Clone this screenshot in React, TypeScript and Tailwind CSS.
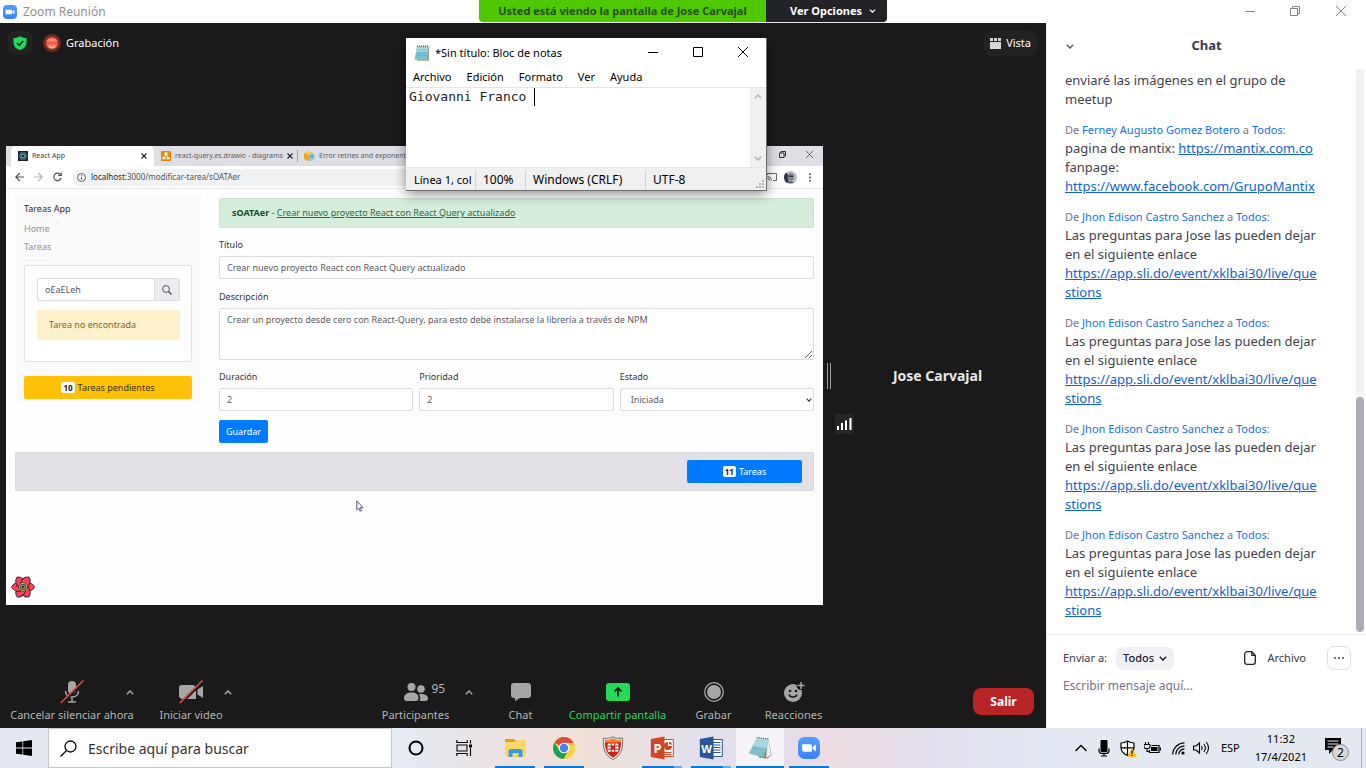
import type { ReactNode } from "react";

const sans = "font-['Noto_Sans','Open_Sans',sans-serif]";

/* ---------- shared icons ---------- */

function ChevronIcon({ up = false, className = "" }: { up?: boolean; className?: string }) {
  return (
    <svg viewBox="0 0 8 5" className={className} fill="none" stroke="currentColor" strokeWidth="1.5" aria-hidden="true">
      <path d={up ? "M.8 4.2 4 1l3.2 3.2" : "M.8.8 4 4 7.2.8"} />
    </svg>
  );
}

function CloseIcon({ className = "" }: { className?: string }) {
  return (
    <svg viewBox="0 0 10 10" className={className} fill="none" stroke="currentColor" aria-hidden="true">
      <path d="M0 0 10 10M10 0 0 10" />
    </svg>
  );
}

function SmallCloseIcon() {
  return (
    <svg viewBox="0 0 6 6" className="size-[6px] shrink-0" fill="none" stroke="#222" strokeWidth="1.1" aria-hidden="true">
      <path d="M.5.500 5.500 5.500M5.500.500.5 5.500" />
    </svg>
  );
}

function ZoomLogo({ className }: { className: string }) {
  return (
    <svg viewBox="0 0 24 24" className={className} aria-hidden="true">
      <defs>
        <linearGradient id="zoomBlue" x1="0" y1="0" x2="0" y2="1">
          <stop offset="0" stopColor="#559ffb" />
          <stop offset="1" stopColor="#3a83f8" />
        </linearGradient>
      </defs>
      <rect width="24" height="24" rx="7" fill="url(#zoomBlue)" />
      <path d="M4.500 8h8.700a2 2 0 0 1 2 2v6H6.500a2 2 0 0 1-2-2z" fill="#fff" />
      <path d="m16 11 3.500-2.700v7.400L16 13.200z" fill="#fff" />
    </svg>
  );
}

function NotepadLogo({ className }: { className: string }) {
  return (
    <svg viewBox="0 0 16 16" className={className} aria-hidden="true">
      <path d="M3.500 1.500h11.800L14.800 15.800H3.200z" fill="#a39c79" />
      <path d="M3 1.800h11.300L13 14.800H.5z" fill="#7cc0d3" />
      <path d="M3 1.800h11.300l-.6 5.500H2z" fill="#a6dbe6" />
      <path d="M3.500 5h9.500M3.200 7.500h9.500M2.800 10h9.500" stroke="#5caac2" strokeWidth=".6" />
      <path d="M3.500.3v2M5.500.3v2M7.500.3v2M9.500.3v2M11.500.3v2M13.500.3v2" stroke="#56656b" strokeWidth=".8" />
    </svg>
  );
}

/* ---------- title bar ---------- */

function TitleBar() {
  return (
    <header className="relative flex h-[23px] shrink-0 items-center justify-between bg-white pl-[3px]">
      <div className="flex items-center gap-[6px] text-[12px] text-[#909090]">
        <ZoomLogo className="size-[14px]" />
        <h1>Zoom Reunión</h1>
      </div>
      <div className="absolute top-0 left-1/2 flex h-[22px] -translate-x-1/2 overflow-hidden rounded-b-[4px] text-[11px] font-bold shadow">
        <p className="flex w-[287px] items-center justify-center bg-[#4ec800] text-[#2c4c22]">
          Usted está viendo la pantalla de Jose Carvajal
        </p>
        <button className="flex w-[121px] items-center justify-end gap-[7px] bg-[#222327] pr-[11px] whitespace-nowrap text-white">
          Ver Opciones
          <ChevronIcon className="h-[4px] w-[7px] shrink-0" />
        </button>
      </div>
      <div className="flex h-full items-center pr-[2px] pb-[2px] text-[#828282]">
        <button aria-label="Minimizar" className="flex w-[45px] justify-center">
          <svg viewBox="0 0 10 10" className="size-[10px]" stroke="currentColor">
            <path d="M0 5.500h10" />
          </svg>
        </button>
        <button aria-label="Restaurar" className="flex w-[45px] justify-center">
          <svg viewBox="0 0 10 10" className="size-[10px]" fill="none" stroke="currentColor">
            <path d="M.5 2.500h7v7h-7zM2.500 2.500v-2h7v7h-2" />
          </svg>
        </button>
        <button aria-label="Cerrar" className="flex w-[47px] justify-center">
          <CloseIcon className="size-[10px]" />
        </button>
      </div>
    </header>
  );
}

/* ---------- shared browser window ---------- */

function BrowserTabs() {
  return (
    <div className="flex h-[20px] shrink-0 items-stretch bg-[#dfdee4] pl-[5px] text-[7px] text-[#5d5c66]">
      <div className="flex w-[143px] items-center gap-[4px] rounded-t-[5px] bg-white pr-[7px] pl-[7px]">
        <svg viewBox="0 0 10 10" className="size-[10px] shrink-0" aria-hidden="true">
          <rect width="10" height="10" fill="#20232a" />
          <g fill="none" stroke="#4fa3b8" strokeWidth=".7">
            <ellipse cx="5" cy="5" rx="4" ry="1.600" />
            <ellipse cx="5" cy="5" rx="4" ry="1.600" transform="rotate(60 5 5)" />
            <ellipse cx="5" cy="5" rx="4" ry="1.600" transform="rotate(120 5 5)" />
          </g>
        </svg>
        <span className="flex-1 text-[#44434a]">React App</span>
        <SmallCloseIcon />
      </div>
      <div className="flex w-[143px] items-center gap-[4px] pr-[6px] pl-[7px]">
        <svg viewBox="0 0 10 10" className="size-[10px] shrink-0" aria-hidden="true">
          <rect width="10" height="10" rx="1" fill="#ef8708" />
          <path d="M5 3 3 7M5 3l2 4" stroke="#fff" strokeWidth=".9" />
          <path d="M3.500 1.500h3v2.200h-3zM1.500 6h2.800v2.200H1.500zM5.700 6h2.800v2.200H5.700z" fill="#fff" />
        </svg>
        <span className="flex-1 whitespace-nowrap">react-query.es.drawio - diagrams</span>
        <SmallCloseIcon />
      </div>
      <div className="my-[4px] w-px bg-[#a5a4ab]" />
      <div className="flex w-[143px] items-center gap-[4px] pl-[6px]">
        <svg viewBox="0 0 11 10" className="h-[10px] w-[11px] shrink-0" aria-hidden="true">
          <path d="M0 2 5 0l4 2v6L4 10 0 8z" fill="#f4a62a" />
          <path d="m0 2 4 1.500L9 2 5 0z" fill="#fbc968" />
          <path d="M5.500 3h5v5l-3 2h-2z" fill="#8ed0e6" />
          <path d="M7 4.500h2v2H7z" fill="none" stroke="#3b8fb0" strokeWidth=".7" />
        </svg>
        <span className="flex-1 whitespace-nowrap">Error retries and exponential</span>
      </div>
      <div className="ml-auto flex items-center gap-[20px] pr-[10px] pb-[3px] text-[#333]">
        <svg viewBox="0 0 7 7" className="size-[7px]" fill="none" stroke="currentColor" aria-hidden="true">
          <path d="M.5 2h4.500v4.500H.5zM2 2V.5h4.500V5H5" />
        </svg>
        <CloseIcon className="size-[7px]" />
      </div>
    </div>
  );
}

function AddressBar() {
  return (
    <div className="flex h-[23px] shrink-0 items-center border-b border-[#e9e9ec] bg-white pr-[7px] pl-[9px] text-[#55545c]">
      <svg viewBox="0 0 48 10" className="h-[10px] w-[48px] shrink-0" fill="none" stroke="currentColor" strokeWidth="1.2" aria-hidden="true">
        <path d="M9 5H1M4.800 1 .8 5l4 4" />
        <path d="M19 5h8M23.200 1l4 4-4 4" stroke="#b5b4ba" />
        <path d="M45.500 2.800A3.700 3.700 0 1 0 46 6M46.300.5v3H43" />
      </svg>
      <div className="ml-[9px] flex h-[17px] flex-1 items-center gap-[5px] rounded-full bg-[#f1f2f4] pl-[5px] text-[8px]">
        <svg viewBox="0 0 9 9" className="size-[9px]" fill="none" stroke="currentColor" aria-hidden="true">
          <circle cx="4.500" cy="4.500" r="4" strokeWidth=".9" />
          <path d="M4.500 4v2.700M4.500 2.200v1" />
        </svg>
        <span className="whitespace-nowrap">
          <span className="text-[#2a2a30]">localhost:</span>3000/modificar-tarea/sOATAer
        </span>
      </div>
      <div className="ml-[7px] flex items-center gap-[7px]">
        <svg viewBox="0 0 10 8" className="h-[8px] w-[10px]" fill="none" stroke="currentColor" strokeWidth=".9" aria-hidden="true">
          <path d="M.5 2V.5h9v7H6M.5 3.500a4 4 0 0 1 4 4M.5 5.500a2 2 0 0 1 2 2" />
        </svg>
        <svg viewBox="0 0 13 13" className="size-[13px]" aria-hidden="true">
          <circle cx="6.500" cy="6.500" r="6.500" fill="#b9bcc6" />
          <path d="M2 1.800A6.500 6.500 0 0 0 3 12l2-1-1-3 .5-4z" fill="#34374a" />
          <ellipse cx="6.800" cy="6" rx="3" ry="4" fill="#8a8793" />
          <path d="M4.500 5.200h4.800" stroke="#2b2c3a" strokeWidth="1.3" />
          <path d="M4 11.500c1-1.500 4-1.500 6 0a6.500 6.500 0 0 1-6 0z" fill="#4c526b" />
        </svg>
        <svg viewBox="0 0 3 9" className="h-[9px] w-[12px]" fill="currentColor" aria-hidden="true">
          <circle cx="1.500" cy="1.200" r="1" />
          <circle cx="1.500" cy="4.500" r="1" />
          <circle cx="1.500" cy="7.800" r="1" />
        </svg>
      </div>
    </div>
  );
}

const field = "w-full rounded-[2px] border border-[#dcdce1] bg-white px-[7px] text-[9px] text-[#5a5962]";

function Field({ label, id, children }: { label: string; id: string; children: ReactNode }) {
  return (
    <div className="flex min-w-0 flex-1 flex-col gap-[4px]">
      <label htmlFor={id} className="text-[9px] leading-[14px] text-[#34333b]">
        {label}
      </label>
      {children}
    </div>
  );
}

function Badge({ children }: { children: ReactNode }) {
  return <span className="rounded-[2px] bg-[#f8f9fa] px-[2px] text-[8px] leading-[11px] font-bold text-[#22222a]">{children}</span>;
}

function TaskSidebar() {
  return (
    <aside className="flex h-[207px] w-[186px] shrink-0 flex-col bg-[#fafafb] px-[9px] pt-[7px] pb-[3px] text-[9px]">
      <p className="leading-[14px] text-[#2f2e36]">Tareas App</p>
      <nav className="mt-[3px] flex w-[26px] flex-col border-b border-[#ededf1] pb-[4px] text-[#92919a]">
        <a href="#home" className="leading-[19px]">Home</a>
        <a href="#tareas" className="leading-[18px]">Tareas</a>
      </nav>
      <div className="mt-[4px] h-[97px] rounded-[2px] border border-[#e2e2e6] bg-white pt-[12px] pr-[11px] pl-[12px]">
        <div className="flex h-[23px]">
          <input
            aria-label="Buscar tarea"
            defaultValue="oEaELeh"
            className="w-0 flex-1 rounded-l-[2px] border border-[#dcdce1] px-[7px] text-[9px] text-[#5a5962]"
          />
          <button aria-label="Buscar" className="flex w-[25px] items-center justify-center rounded-r-[2px] border border-l-0 border-[#dcdce1] bg-[#ebebf0]">
            <svg viewBox="0 0 10 10" className="size-[10px]" fill="none" stroke="#44434b" aria-hidden="true">
              <circle cx="4" cy="4" r="3.400" strokeWidth=".9" />
              <path d="m6.500 6.500 3 3" strokeWidth="1.2" />
            </svg>
          </button>
        </div>
        <p className="mt-[9px] rounded-[2px] bg-[#fff1cc] px-[12px] leading-[30px] text-[#846716]">Tarea no encontrada</p>
      </div>
      <button className="mt-auto flex h-[23px] items-center justify-center gap-[3px] rounded-[2px] bg-[#ffc107] text-[#3e341a]">
        <Badge>10</Badge>
        Tareas pendientes
      </button>
    </aside>
  );
}

function TaskForm() {
  return (
    <form className="flex min-w-0 flex-1 flex-col pt-[3px]">
      <p className="rounded-[2px] border border-[#c9e3d0] bg-[#d5edda] px-[12px] text-[9px] leading-[28px] text-[#2c6b3c]">
        <strong className="text-[#174c25]">sOATAer</strong> -{" "}
        <a href="#tarea" className="underline">Crear nuevo proyecto React con React Query actualizado</a>
      </p>
      <div className="mt-[10px] flex">
        <Field label="Título" id="titulo">
          <input id="titulo" defaultValue="Crear nuevo proyecto React con React Query actualizado" className={`${field} h-[23px]`} />
        </Field>
      </div>
      <div className="mt-[11px] flex">
        <Field label="Descripción" id="descripcion">
          <textarea
            id="descripcion"
            defaultValue="Crear un proyecto desde cero con React-Query, para esto debe instalarse la librería a través de NPM"
            className={`${field} h-[52px] resize-y pt-[4px] leading-[13px]`}
          />
        </Field>
      </div>
      <div className="mt-[10px] flex gap-[6px]">
        <Field label="Duración" id="duracion">
          <input id="duracion" defaultValue="2" className={`${field} h-[23px]`} />
        </Field>
        <Field label="Prioridad" id="prioridad">
          <input id="prioridad" defaultValue="2" className={`${field} h-[23px]`} />
        </Field>
        <Field label="Estado" id="estado">
          <div className="relative flex">
            <select id="estado" className={`${field} h-[23px] appearance-none pl-[10px]`}>
              <option>Iniciada</option>
            </select>
            <ChevronIcon className="pointer-events-none absolute top-[10px] right-[2px] h-[4px] w-[6px] text-[#333]" />
          </div>
        </Field>
      </div>
      <button type="button" className="mt-[9px] h-[23px] self-start rounded-[2px] bg-[#007bff] px-[7px] text-[9px] text-white">
        Guardar
      </button>
    </form>
  );
}

function QueryFlower() {
  return (
    <svg viewBox="-12 -12 24 24" className="size-[24px]" aria-hidden="true">
      {[0, 60, 120, 180, 240, 300].map((a) => (
        <path
          key={a}
          d="M2-4C5-5.200 9.800-4 11.400-.3 10.500 3.200 6.500 4.600 2 4z"
          transform={`rotate(${a})`}
          fill="#ff4154"
          stroke="#3d2142"
          strokeWidth="1"
        />
      ))}
      <circle r="4.600" fill="#2a3440" />
      <circle r="3.700" fill="none" stroke="#d9c35a" strokeWidth=".9" />
      <circle r="1.900" fill="none" stroke="#c7cf8a" strokeWidth=".8" />
    </svg>
  );
}

function SharedScreen() {
  return (
    <section aria-label="Pantalla compartida" className="relative flex h-[459px] min-w-0 flex-1 flex-col bg-[#fefefe]">
      <BrowserTabs />
      <AddressBar />
      <div className="flex flex-1 flex-col px-[9px] py-[6px]">
        <div className="flex gap-[18px]">
          <TaskSidebar />
          <TaskForm />
        </div>
        <footer className="mt-[9px] flex h-[39px] items-center justify-end rounded-[2px] border border-[#d8d8de] bg-[#e2e1e6] pr-[11px]">
          <button className="flex h-[23px] w-[115px] items-center justify-center gap-[3px] rounded-[2px] bg-[#007bff] text-[9px] text-white">
            <Badge>11</Badge>
            Tareas
          </button>
        </footer>
        <button aria-label="React Query Devtools" className="mt-auto -ml-[4px] self-start">
          <QueryFlower />
        </button>
      </div>
      <svg viewBox="0 0 8 12" className="absolute top-[354px] left-[350px] h-[12px] w-[8px]" aria-hidden="true">
        <path d="M.8.8v9l2-1.800 1.300 3.200 1.500-.6-1.300-3H7z" fill="#fff" stroke="#44446a" strokeWidth=".9" />
      </svg>
    </section>
  );
}

/* ---------- meeting toolbar ---------- */

function MicMuted() {
  return (
    <svg viewBox="0 0 24 24" className="size-[24px]" aria-hidden="true">
      <rect x="8" y="1" width="8" height="13" rx="4" fill="#a6a6a6" />
      <path d="M5.500 11c0 3.800 2.800 6 6.500 6s6.500-2.200 6.500-6M12 17v4.500M8 22h8" fill="none" stroke="#a6a6a6" strokeWidth="1.500" />
      <path d="M1.500 23.500 24 1.500" stroke="#1a1a1a" strokeWidth="3" />
      <path d="M.8 23 23.500.5" stroke="#e8494c" strokeWidth="1.500" />
    </svg>
  );
}

function VideoMuted() {
  return (
    <svg viewBox="0 0 24 24" className="size-[24px]" aria-hidden="true">
      <path d="M2.500 5H13a4 4 0 0 1 4 4v10H4a4 4 0 0 1-4-4V7.500A2.500 2.500 0 0 1 2.500 5zM18.500 9.500 24 6v12l-5.500-3.500z" fill="#a6a6a6" />
      <path d="M1.500 23.500 24 1.500" stroke="#1a1a1a" strokeWidth="3" />
      <path d="M.8 23 23.500.5" stroke="#e8494c" strokeWidth="1.500" />
    </svg>
  );
}

function ToolButton({ label, icon, width, green = false }: { label: string; icon: ReactNode; width: string; green?: boolean }) {
  return (
    <button className={`flex flex-col items-center whitespace-nowrap ${width} ${green ? "text-[#23d959]" : "text-[#b4b4b4]"}`}>
      <span className="flex h-[24px] items-center">{icon}</span>
      <span className="mt-[3px] text-[11px] leading-[15px]">{label}</span>
    </button>
  );
}

function MoreButton({ label }: { label: string }) {
  return (
    <button aria-label={label} className="flex h-[24px] w-[16px] items-center justify-center text-[#a6a6a6]">
      <ChevronIcon up className="h-[5px] w-[8px]" />
    </button>
  );
}

function MeetingToolbar() {
  return (
    <div className="flex h-[56px] shrink-0 items-start pt-[8px] pr-[12px] pl-[8px]">
      <ToolButton width="w-[128px]" label="Cancelar silenciar ahora" icon={<MicMuted />} />
      <div className="-ml-[14px]"><MoreButton label="Opciones de audio" /></div>
      <div className="ml-[20px]"><ToolButton width="w-[66px]" label="Iniciar video" icon={<VideoMuted />} /></div>
      <div className="-ml-[4px]"><MoreButton label="Opciones de video" /></div>
      <div className="ml-auto flex">
        <ToolButton
          width="w-[70px]"
          label="Participantes"
          icon={
            <span className="relative flex">
              <svg viewBox="0 0 24 18" className="h-[18px] w-[24px]" fill="#a6a6a6" aria-hidden="true">
                <circle cx="7.500" cy="4" r="4" />
                <path d="M0 15c0-3.500 3-5.500 7.500-5.500s7 2 7 5.500c0 2-1 3-2.500 3H2.500C1 18 0 17 0 15z" />
                <circle cx="17" cy="6" r="3.800" />
                <path d="M15 11.200c5.500-.6 9 1.300 9 4.300 0 1.500-1 2.500-2.500 2.500h-6c1.200-2 1-4.800-.5-6.800z" />
              </svg>
              <span className="absolute -top-[2px] left-[28px] text-[12px] leading-[16px]">95</span>
            </span>
          }
        />
        <div className="ml-[10px]"><MoreButton label="Opciones de participantes" /></div>
      </div>
      <div className="mr-[4px] ml-[24px] flex">
        <ToolButton
          width="w-[40px]"
          label="Chat"
          icon={
            <svg viewBox="0 0 20 18" className="h-[18px] w-[20px]" aria-hidden="true">
              <path d="M3 0h14a3 3 0 0 1 3 3v9a3 3 0 0 1-3 3H9l-5 3v-3H3a3 3 0 0 1-3-3V3a3 3 0 0 1 3-3z" fill="#a6a6a6" />
            </svg>
          }
        />
        <div className="ml-[27px]">
          <ToolButton
            green
            width="w-[100px]"
            label="Compartir pantalla"
            icon={
              <svg viewBox="0 0 24 18" className="h-[18px] w-[24px]" aria-hidden="true">
                <rect width="24" height="18" rx="3" fill="#23d959" />
                <path d="M12 13.500V5M8.500 8.500 12 5l3.500 3.500" fill="none" stroke="#111" strokeWidth="1.700" />
              </svg>
            }
          />
        </div>
        <div className="ml-[26px]">
          <ToolButton
            width="w-[40px]"
            label="Grabar"
            icon={
              <svg viewBox="0 0 20 20" className="size-[20px]" aria-hidden="true">
                <circle cx="10" cy="10" r="9.300" fill="none" stroke="#a6a6a6" strokeWidth="1.300" />
                <circle cx="10" cy="10" r="7" fill="#a6a6a6" />
              </svg>
            }
          />
        </div>
        <div className="ml-[29px]">
          <ToolButton
            width="w-[62px]"
            label="Reacciones"
            icon={
              <svg viewBox="0 0 22 22" className="size-[22px]" aria-hidden="true">
                <circle cx="10" cy="12" r="9" fill="#a6a6a6" />
                <circle cx="18" cy="4.500" r="4.500" fill="#1a1a1a" />
                <path d="M18 1v7M14.500 4.500h7" stroke="#a6a6a6" strokeWidth="1.500" />
                <circle cx="7" cy="10" r="1.300" fill="#1a1a1a" />
                <circle cx="13" cy="10" r="1.300" fill="#1a1a1a" />
                <path d="M6 13.500c.8 3.300 7.200 3.300 8 0" fill="none" stroke="#1a1a1a" strokeWidth="1.500" />
              </svg>
            }
          />
        </div>
      </div>
      <button className="mt-[8px] ml-auto h-[27px] w-[61px] rounded-[8px] bg-[#b72525] text-[12px] font-bold text-white">Salir</button>
    </div>
  );
}

function Meeting() {
  return (
    <main className="flex min-w-0 flex-1 flex-col bg-[#1a1a1a]">
      <div className="flex h-[56px] shrink-0 items-start pt-[8px] pr-[9px] pl-[8px] text-[11px] text-white">
        <button aria-label="Información de seguridad" className="flex size-[24px] items-center justify-center rounded-[6px] bg-[#222]">
          <svg viewBox="0 0 14 14" className="size-[14px]" aria-hidden="true">
            <path d="M7 0c1.500 1.500 4 2 6.500 2v4.500c0 4-3 6.500-6.500 7.500C3.500 13 .5 10.500.5 6.500V2C3 2 5.500 1.500 7 0z" fill="#23d959" />
            <path d="m4 7 2.200 2.200L10.200 5" fill="none" stroke="#1a1a1a" strokeWidth="1.500" />
          </svg>
        </button>
        <div className="ml-[10px] flex h-[24px] items-center gap-[4px]">
          <svg viewBox="0 0 20 20" className="size-[20px]" aria-hidden="true">
            <defs>
              <radialGradient id="recGlow">
                <stop offset=".4" stopColor="#e0491d" />
                <stop offset="1" stopColor="#e0491d" stopOpacity="0" />
              </radialGradient>
              <linearGradient id="recBall" x1="0" y1="0" x2="0" y2="1">
                <stop offset="0" stopColor="#fb5643" />
                <stop offset=".25" stopColor="#fd9384" />
                <stop offset=".5" stopColor="#fa4a37" />
                <stop offset="1" stopColor="#fdc4ba" />
              </linearGradient>
            </defs>
            <circle cx="10" cy="10" r="10" fill="url(#recGlow)" />
            <circle cx="10" cy="10" r="5.500" fill="url(#recBall)" />
          </svg>
          <span>Grabación</span>
        </div>
        <button className="ml-auto flex h-[25px] items-center gap-[5px] rounded-[8px] bg-[#222] px-[6px]">
          <svg viewBox="0 0 11 11" className="size-[11px]" fill="#d6d6d6" aria-hidden="true">
            <path d="M0 0h3v3H0zM4 0h3v3H4zM8 0h3v3H8zM0 4h11v7H0z" />
          </svg>
          Vista
        </button>
      </div>
      <div className="flex min-h-0 flex-1 items-center pl-[6px]">
        <SharedScreen />
        <div className="mx-[4px] h-[26px] w-[4px] shrink-0 border-x border-[#9a9a9a]" />
        <div className="relative mr-[6px] flex h-[116px] w-[205px] shrink-0 items-center justify-center">
          <p className="text-[14px] font-bold text-[#e8e8e8]">Jose Carvajal</p>
          <svg viewBox="0 0 18 20" className="absolute bottom-0 left-0 h-[20px] w-[18px]" aria-label="Calidad de la conexión">
            <rect width="18" height="20" fill="#262626" />
            <path d="M3 16v-4M7 16V9M11 16V6.500M15.500 16V4" stroke="#fff" strokeWidth="2" />
          </svg>
        </div>
      </div>
      <MeetingToolbar />
    </main>
  );
}

/* ---------- chat ---------- */

function ChatLink({ children }: { children: ReactNode }) {
  return <a href="#enlace" className="text-[#0e63ce] underline">{children}</a>;
}

function Message({ from, children }: { from: string; children: ReactNode }) {
  return (
    <article className="mt-[12px]">
      <p className="text-[11px] leading-[18px] whitespace-nowrap text-[#747487]">
        De <span className="text-[#0e72ed]">{from}</span> a <span className="text-[#0e72ed]">Todos</span>:
      </p>
      {children}
    </article>
  );
}

function QuestionsMessage() {
  return (
    <Message from="Jhon Edison Castro Sanchez">
      <p>
        Las preguntas para Jose las pueden dejar
        <br />
        en el siguiente enlace
        <br />
        <ChatLink>
          https://app.sli.do/event/xklbai30/live/que
          <br />
          stions
        </ChatLink>
      </p>
    </Message>
  );
}

function ChatPanel() {
  return (
    <aside className="flex w-[320px] shrink-0 flex-col border-l border-[#e8e8ec] bg-white">
      <div className="relative flex h-[46px] shrink-0 items-center justify-center text-[13px] font-bold text-[#39394d]">
        <button aria-label="Contraer chat" className="absolute left-[19px] text-[#5d5d70]">
          <ChevronIcon className="h-[5px] w-[8px]" />
        </button>
        <h2>Chat</h2>
      </div>
      <div className="flex min-h-0 flex-1 overflow-hidden">
        <div className="min-w-0 flex-1 pt-[2px] pl-[18px] text-[13px] leading-[19px] whitespace-nowrap text-[#3f3f4c]">
          <p>
            enviaré las imágenes en el grupo de
            <br />
            meetup
          </p>
          <Message from="Ferney Augusto Gomez Botero">
            <p>
              pagina de mantix: <ChatLink>https://mantix.com.co</ChatLink>
              <br />
              fanpage:
              <br />
              <ChatLink>https://www.facebook.com/GrupoMantix</ChatLink>
            </p>
          </Message>
          <QuestionsMessage />
          <QuestionsMessage />
          <QuestionsMessage />
          <QuestionsMessage />
        </div>
        <div className="mr-[2px] mb-[2px] flex w-[8px] flex-col justify-end rounded-full bg-[#f1f1f6]">
          <div className="h-[235px] rounded-full bg-[#adadb7]" />
        </div>
      </div>
      <div className="h-[94px] shrink-0 border-t border-[#e6e6f0] pt-[11px] pr-[15px] pl-[16px]">
        <div className="flex h-[24px] items-center text-[11px] text-[#39394d]">
          <span>Enviar a:</span>
          <button className="ml-[9px] flex h-[23px] items-center gap-[5px] rounded-[7px] bg-[#f1f1f6] px-[7px] font-medium text-[#222230]">
            Todos
            <ChevronIcon className="h-[5px] w-[8px]" />
          </button>
          <button className="ml-auto flex items-center gap-[11px]">
            <svg viewBox="0 0 12 14" className="h-[14px] w-[12px]" fill="none" stroke="#222230" strokeWidth="1.3" aria-hidden="true">
              <path d="M3 .7h4.800l3.500 3.600V11a2.300 2.300 0 0 1-2.300 2.300H3A2.300 2.300 0 0 1 .7 11V3A2.300 2.300 0 0 1 3 .7zM7.800 1v3.300H11" />
            </svg>
            Archivo
          </button>
          <button aria-label="Más opciones" className="ml-[21px] flex size-[24px] items-center justify-center rounded-[7px] border border-[#dedee8]">
            <svg viewBox="0 0 10 2" className="h-[2px] w-[10px]" fill="#747487" aria-hidden="true">
              <path d="M0 0h2v2H0zM4 0h2v2H4zM8 0h2v2H8z" />
            </svg>
          </button>
        </div>
        <input
          aria-label="Mensaje"
          placeholder="Escribir mensaje aquí..."
          className="mt-[5px] h-[20px] w-full text-[12px] placeholder:text-[#747487]"
        />
      </div>
    </aside>
  );
}

/* ---------- notepad ---------- */

function Notepad() {
  return (
    <section
      aria-label="Bloc de notas"
      className="absolute top-[38px] left-[406px] flex h-[153px] w-[361px] flex-col border-r border-b border-[#6b6b6b] bg-white text-[12px] text-black shadow-[0_3px_12px_rgba(0,0,0,0.45)]"
    >
      <div className="flex h-[30px] shrink-0 items-center pl-[8px]">
        <NotepadLogo className="size-[16px]" />
        <h2 className="ml-[5px] text-[11px]">*Sin título: Bloc de notas</h2>
        <div className="mb-[2px] ml-auto flex">
          <button aria-label="Minimizar" className="flex w-[45px] justify-center">
            <svg viewBox="0 0 10 10" className="size-[10px]" stroke="currentColor"><path d="M0 5.500h10" /></svg>
          </button>
          <button aria-label="Maximizar" className="flex w-[45px] justify-center">
            <svg viewBox="0 0 10 10" className="size-[10px]" fill="none" stroke="currentColor"><path d="M.5.5h9v9h-9z" /></svg>
          </button>
          <button aria-label="Cerrar" className="flex w-[46px] justify-center">
            <CloseIcon className="size-[10px]" />
          </button>
        </div>
      </div>
      <nav className="flex h-[19px] shrink-0 items-center gap-[15px] pl-[7px] text-[11px]">
        <button>Archivo</button>
        <button>Edición</button>
        <button>Formato</button>
        <button>Ver</button>
        <button>Ayuda</button>
      </nav>
      <div className="flex min-h-0 flex-1 border-y border-[#e4e4e4]">
        <div className="flex flex-1 pl-[3px] font-['DejaVu_Sans_Mono','Liberation_Mono',monospace] text-[13px] leading-[18px] text-[#1c1c1c]">
          <span className="whitespace-pre">Giovanni Franco </span>
          <span className="h-[18px] w-px bg-black" />
        </div>
        <div className="flex w-[16px] flex-col items-center justify-between bg-[#f0f0f0] py-[6px] text-[#b4b4b4]">
          <ChevronIcon up className="h-[5px] w-[8px]" />
          <ChevronIcon className="h-[5px] w-[8px]" />
        </div>
      </div>
      <div className="relative flex h-[22px] shrink-0 items-center bg-[#f0f0f0] pt-[1px] leading-[20px]">
        <span className="w-[70px] border-r border-[#d4d4d4] pl-[8px] text-[11px] whitespace-nowrap">Línea 1, col</span>
        <span className="w-[50px] border-r border-[#d4d4d4] pl-[7px]">100%</span>
        <span className="w-[120px] border-r border-[#d4d4d4] pl-[7px]">Windows (CRLF)</span>
        <span className="pl-[7px]">UTF-8</span>
        <svg viewBox="0 0 8 8" className="absolute right-[2px] bottom-[2px] size-[8px]" fill="#b4b4b4" aria-hidden="true">
          <path d="M6 0h2v2H6zM3 3h2v2H3zM6 3h2v2H6zM0 6h2v2H0zM3 6h2v2H3zM6 6h2v2H6z" />
        </svg>
      </div>
    </section>
  );
}

/* ---------- taskbar ---------- */

function ExplorerIcon() {
  return (
    <svg viewBox="0 0 24 24" className="size-[24px]" aria-hidden="true">
      <path d="M2 3h9l2 2v3H2z" fill="#e0a30f" />
      <path d="M2 6h9l2-2h10v17H2z" fill="#fdd66b" />
      <path d="M5.500 21v-6.500l1.500-1.500h11l1.500 1.500V21h-4v-4h-6v4z" fill="#3b9ad9" />
    </svg>
  );
}

function ChromeIcon() {
  return (
    <svg viewBox="0 0 24 24" className="size-[24px]" aria-hidden="true">
      <circle cx="12" cy="12" r="11" fill="#fc3" />
      <path d="M12 12 2.500 6.500A11 11 0 0 1 21.500 6.500L21.800 7H12z" fill="#dd4b3e" />
      <path d="M2.500 6.500A11 11 0 0 0 11.500 23l5-8.500L12 12 7.500 14.500z" fill="#1c9f5a" />
      <path d="M12 7h9.800a11 11 0 0 1-10.300 16l5-8.500z" fill="#fdcf42" />
      <circle cx="12" cy="12" r="5.300" fill="#fff" />
      <circle cx="12" cy="12" r="4.200" fill="#4583ee" />
    </svg>
  );
}

function FortiIcon() {
  return (
    <svg viewBox="0 0 24 24" className="size-[24px]" aria-hidden="true">
      <path d="M12 .8c3 1.700 6 1.900 9.500 1.200.8 10-1 17.500-9.500 21.500C3.500 19.500 1.700 12 2.500 2 6 2.700 9 2.500 12 .8z" fill="#e9e5e3" stroke="#77716f" strokeWidth="1" />
      <path d="M12 2.500c2.500 1.500 5 1.700 8 1.300.4 8.200-1.300 14.500-8 17.700C5.300 18.300 3.600 12 4 3.800 7 4.200 9.500 4 12 2.500z" fill="#cf1e13" />
      <path d="M12 2.500c2.500 1.500 5 1.700 8 1.300v2.700H4V3.800C7 4.200 9.500 4 12 2.500z" fill="#f5862b" />
      <path d="M7.500 7.500h2.300v2H6.500v-1zM10.800 7.500h2.400v2h-2.400zM14.200 7.500h2.300l1 1v1h-3.300zM6.500 10.500h3.300v2.200H6.500zM14.200 10.500h3.300v2.200h-3.300zM6.500 13.700h3.300v2H7.500l-1-1zM10.800 13.700h2.400v2h-2.400zM14.200 13.700h3.300v1l-1 1h-2.300z" fill="#fff" />
    </svg>
  );
}

function OfficeIcon({ letter, color }: { letter: "P" | "W"; color: string }) {
  return (
    <svg viewBox="0 0 24 24" className="size-[24px]" aria-hidden="true">
      <path d="M12 3.500h11.300v17H12z" fill="#fff" stroke={color} />
      {letter === "P" ? (
        <>
          <path d="M18 6v4h4a4 4 0 1 1-4-4z" fill={color} />
          <path d="M19 5.500a3.500 3.500 0 0 1 3 3h-3zM14 16h7.500v1H14zM14 18h7.500v1H14z" fill={color} />
        </>
      ) : (
        <path d="M14 6.500h7.500M14 9h7.500M14 11.500h7.500M14 14h7.500M14 16.500h7.500" stroke={color} />
      )}
      <path d="M.8 3 14.500.5v23L.8 21z" fill={color} />
      <text x="7.500" y="16.500" textAnchor="middle" fill="#fff" fontSize={letter === "P" ? 13 : 11} fontWeight="700">{letter}</text>
    </svg>
  );
}

type AppState = "none" | "open" | "stacked" | "active";

function TaskButton({ label, state, children }: { label: string; state: AppState; children: ReactNode }) {
  return (
    <button
      aria-label={label}
      className={`flex h-[40px] w-[48px] flex-col items-center justify-between ${state === "active" ? "bg-[#f5f3f8]" : ""}`}
    >
      <span className="flex h-[38px] items-center pt-[2px]">{children}</span>
      {state === "active" && <span className="h-[2px] w-full bg-[#0b78d4]" />}
      {state === "open" && <span className="h-[2px] w-[40px] bg-[#0b78d4]" />}
      {state === "stacked" && (
        <span className="flex h-[2px] w-[40px] bg-[#6aaee6]">
          <span className="w-[32px] bg-[#0b78d4]" />
        </span>
      )}
    </button>
  );
}

function Tray() {
  return (
    <div className="ml-auto flex h-full items-center text-[11px] text-black">
      <svg viewBox="0 0 12 8" className="h-[8px] w-[12px]" fill="none" stroke="currentColor" strokeWidth="1.3" aria-label="Iconos ocultos">
        <path d="m.5 7 5.500-5.500L11.500 7" />
      </svg>
      <svg viewBox="0 0 12 17" className="ml-[11px] h-[17px] w-[12px]" aria-label="Micrófono">
        <rect x="2.500" y="0" width="7" height="12" rx="1" />
        <path d="M1 8.500v2.300a2.500 2.500 0 0 0 2.500 2.500h5a2.500 2.500 0 0 0 2.500-2.500V8.500M6 13v3M3 16h6" fill="none" stroke="#000" strokeWidth="1.2" />
      </svg>
      <svg viewBox="0 0 17 17" className="ml-[10px] size-[17px]" aria-label="Seguridad">
        <path d="M7.500 1c2 1.400 4 2 6.500 2v4.500c0 4-3 6.500-6.500 8C4 14 1 11.500 1 7.500V3c2.500 0 4.500-.6 6.500-2zM7.500 1v14M1 7.800h13" fill="#fff" stroke="#000" strokeWidth="1.2" />
        <path d="M12 7.500 17 17H7z" fill="#fcc21b" />
        <path d="M12 10.500v3.200M12 14.800v1.200" stroke="#000" strokeWidth="1.2" />
      </svg>
      <svg viewBox="0 0 17 13" className="ml-[7px] h-[13px] w-[17px]" aria-label="Batería">
        <path d="M7.500 3.500H15v7H5.500V8M16.500 5.500v3" fill="none" stroke="#000" strokeWidth="1.2" />
        <path d="M7 5h6.500v4H7z" />
        <path d="M1.500 0v2.500M4.500 0v2.500M0 2.500h6v2c0 3-6 3-6 0zM3 6.500v3h2" fill="none" stroke="#000" strokeWidth="1.1" />
      </svg>
      <svg viewBox="0 0 13 13" className="ml-[11px] size-[13px]" fill="none" stroke="#000" strokeWidth="1.2" aria-label="Red">
        <path d="M.7 12.500A12 12 0 0 1 12.500.8M3.700 12.500a9 9 0 0 1 8.800-8.700M6.700 12.500a6 6 0 0 1 5.800-5.700" />
        <circle cx="11" cy="11" r="1" fill="#000" />
      </svg>
      <svg viewBox="0 0 17 14" className="ml-[8px] h-[14px] w-[17px]" fill="none" stroke="#000" strokeWidth="1.1" aria-label="Volumen">
        <path d="M.6 5v4H3l3.500 3V2L3 5zM8.500 5c1 1.300 1 2.700 0 4M10.800 3c2 2.500 2 5.500 0 8M13.200 1c3 3.500 3 8.500 0 12" />
      </svg>
      <span className="ml-[11px]">ESP</span>
      <div className="ml-[15px] text-center text-[11px] leading-[18px]">
        <div>11:32</div>
        <div>17/4/2021</div>
      </div>
      <svg viewBox="0 0 25 26" className="ml-[17px] h-[26px] w-[25px]" aria-label="2 notificaciones">
        <path d="M1 3h16v12H9l-4 4v-4H1z" />
        <path d="M3.500 6h11M3.500 9h11M3.500 12h6" stroke="#e3e8f1" />
        <circle cx="16.500" cy="17.500" r="8" fill="#d8d8da" stroke="#8a8a8e" />
        <text x="16.500" y="21.800" textAnchor="middle" fontSize="12">2</text>
      </svg>
      <span className="mr-[4px] ml-[12px] h-full w-px bg-[#aab0bb]" />
    </div>
  );
}

function Taskbar() {
  return (
    <footer className="flex h-[40px] shrink-0 items-center bg-[linear-gradient(90deg,#e4e9f2_0%,#e6eaf2_30%,#ece3e2_37%,#f0e0d8_43%,#e4e0ea_50%,#e2deec_55%,#ecdce3_61%,#e2e0ec_68%,#e3e9f2_76%,#e3e8f1_100%)]">
      <button aria-label="Inicio" className="flex h-full w-[48px] items-center justify-center">
        <svg viewBox="0 0 16 16" className="size-[16px]" aria-hidden="true">
          <path d="M0 2.300 6.500 1.400v6.200H0zM7.200 1.300 16 0v7.600H7.200zM0 8.400h6.500v6.200L0 13.700zM7.200 8.400H16V16l-8.800-1.300z" />
        </svg>
      </button>
      <label className="flex h-full w-[344px] items-center border border-[#c6c6c8] bg-white pl-[11px]">
        <svg viewBox="0 0 17 17" className="size-[17px]" fill="none" stroke="#000" strokeWidth="1.3" aria-hidden="true">
          <circle cx="10.500" cy="6.500" r="5.500" />
          <path d="M6.500 10.500.5 16.500" />
        </svg>
        <input aria-label="Buscar en Windows" placeholder="Escribe aquí para buscar" className="ml-[11px] w-0 flex-1 text-[14px] placeholder:text-[#333]" />
      </label>
      <TaskButton label="Cortana" state="none">
        <svg viewBox="0 0 16 16" className="size-[16px]" aria-hidden="true">
          <circle cx="8" cy="8" r="6.500" fill="none" stroke="#000" strokeWidth="2" />
        </svg>
      </TaskButton>
      <TaskButton label="Vista de tareas" state="none">
        <svg viewBox="0 0 17 16" className="h-[16px] w-[17px]" fill="none" stroke="#000" strokeWidth="1.1" aria-hidden="true">
          <path d="M.8 0v2.500h10.400V0M1 5h10v6H1zM.8 16v-2.500h10.400V16M14.500 0v3.500M14.500 8v8" />
          <path d="M13 4.500h3v3h-3z" fill="#000" stroke="none" />
        </svg>
      </TaskButton>
      <div className="ml-[3px] flex gap-px">
        <TaskButton label="Explorador de archivos" state="open"><ExplorerIcon /></TaskButton>
        <TaskButton label="Chrome" state="open"><ChromeIcon /></TaskButton>
        <TaskButton label="FortiClient" state="none"><FortiIcon /></TaskButton>
        <TaskButton label="PowerPoint" state="stacked"><OfficeIcon letter="P" color="#d24625" /></TaskButton>
        <TaskButton label="Word" state="stacked"><OfficeIcon letter="W" color="#2a5699" /></TaskButton>
        <TaskButton label="Bloc de notas" state="active">
          <svg viewBox="0 0 24 24" className="size-[24px]" aria-hidden="true">
            <path d="m20 2 3.500 17-4 3.500-9-1z" fill="#8b7d55" />
            <path d="m20 2 3 17-5 3z" fill="#e9f1f2" />
            <path d="M9 1.500 21 3l-5 18.500L.8 17.500z" fill="#7fbfcb" />
            <path d="M9 1.500 21 3l-2.500 9L4.500 10z" fill="#a5d8df" />
            <path d="M9 1.500 21 3" stroke="#50686d" strokeWidth="1.200" strokeDasharray="1 1" />
          </svg>
        </TaskButton>
        <TaskButton label="Zoom" state="open"><ZoomLogo className="size-[22px]" /></TaskButton>
      </div>
      <Tray />
    </footer>
  );
}

export default function App() {
  return (
    <div className={`relative flex h-screen flex-col overflow-hidden bg-white ${sans}`}>
      <TitleBar />
      <div className="flex min-h-0 flex-1">
        <Meeting />
        <ChatPanel />
      </div>
      <Taskbar />
      <Notepad />
    </div>
  );
}
